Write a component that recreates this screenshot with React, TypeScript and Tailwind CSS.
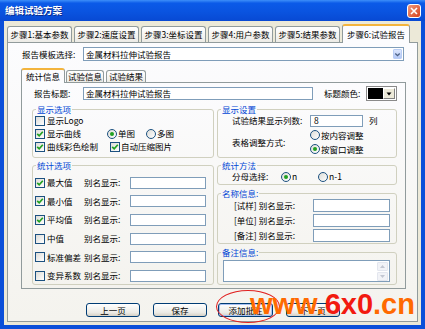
import type { ReactNode } from "react";

const Check = ({ on }: { on?: boolean }) => (
  <span className="flex h-[10px] w-[10px] shrink-0 items-center justify-center border border-[#1c5180] bg-[linear-gradient(135deg,#dcdcd7,#ffffff)]">
    {on && (
      <svg width="8" height="8" viewBox="0 0 8 8">
        <path d="M1.2 3.8 L3.2 5.8 L6.8 1.8" stroke="#21a121" strokeWidth="1.7" fill="none" />
      </svg>
    )}
  </span>
);

const Radio = ({ on }: { on?: boolean }) => (
  <span className="flex h-[10px] w-[10px] shrink-0 items-center justify-center rounded-full border border-[#1c5180] bg-[linear-gradient(135deg,#dcdcd7,#ffffff)]">
    {on && <span className="h-[4px] w-[4px] rounded-full bg-[#21a121]" />}
  </span>
);

const Legend = ({ children }: { children: ReactNode }) => (
  <legend className="ml-[3px] px-[1px] leading-[11px] text-[#0046d5]">{children}</legend>
);

const Button = ({ label, focus }: { label: string; focus?: boolean }) => (
  <div
    className={
      focus
        ? "flex h-[14px] w-[55px] items-center justify-center rounded-[3px] border border-[#003c74] bg-[linear-gradient(#ffffff,#ecebe6_70%,#d6d0c5)] shadow-[inset_0_0_0_1px_#a8c1f2]"
        : "flex h-[14px] w-[54px] items-center justify-center rounded-[3px] border border-[#003c74] bg-[linear-gradient(#ffffff,#ecebe6_70%,#d6d0c5)]"
    }
  >
    {label}
  </div>
);

const steps = ["步骤1:基本参数", "步骤2:速度设置", "步骤3:坐标设置", "步骤4:用户参数", "步骤5:结果参数"];

const stats = [
  { label: "最大值", on: true },
  { label: "最小值", on: true },
  { label: "平均值", on: true },
  { label: "中值", on: false },
  { label: "标准偏差", on: false },
  { label: "变异系数", on: false },
];

const names = ["[试样]", "[单位]", "[备注]"];

export default function App() {
  return (
    <div className="relative h-[329px] w-[425px] overflow-hidden whitespace-nowrap bg-[#0b4fd9] font-['Noto_Sans_CJK_SC',sans-serif] text-[8.5px] leading-[11px] text-black">
      {/* Title bar */}
      <div className="flex h-[21px] items-center justify-between bg-[linear-gradient(#3d8ff9_0%,#0b5ae8_15%,#0a54e0_55%,#0849d3_100%)] pl-[5px] pr-[4px]">
        <span className="text-[9.5px] font-bold text-white [text-shadow:1px_1px_#0a2a8c]">编辑试验方案</span>
        <div className="mt-[1px] flex h-[14px] w-[14px] items-center justify-center rounded-[3px] border border-white bg-[linear-gradient(135deg,#f29a7c,#d8431c)]">
          <svg width="8" height="8" viewBox="0 0 8 8">
            <path d="M1 1 L7 7 M7 1 L1 7" stroke="#ffffff" strokeWidth="1.6" />
          </svg>
        </div>
      </div>

      {/* Body */}
      <div className="mx-[4px] flex h-[304px] flex-col bg-[#ece9d8] px-[3px]">
        {/* Step tabs */}
        <div className="flex h-[21px] items-end">
          {steps.map((s) => (
            <div
              key={s}
              className="mr-[2px] flex h-[16px] w-[65px] items-center justify-center rounded-t-[3px] border border-b-0 border-[#919b9c] bg-[linear-gradient(#ffffff,#ecebe6)]"
            >
              {s}
            </div>
          ))}
          <div className="relative z-10 -mb-[1px] flex h-[19px] w-[68px] items-center justify-center rounded-t-[3px] border border-b-0 border-[#919b9c] border-t-2 border-t-[#f3b43d] bg-[#fcfcfe]">
            步骤6:试验报告
          </div>
        </div>

        {/* Step panel */}
        <div className="flex h-[280px] flex-col border border-[#919b9c] bg-[linear-gradient(#fcfcfe,#f4f3ee)]">
          <div className="mt-[4px] flex h-[14px] items-center pl-[14px]">
            <span className="w-[61px]">报告模板选择:</span>
            <div className="flex h-[14px] w-[321px] items-center justify-between border border-[#7f9db9] bg-white pl-[2px] pr-[1px]">
              <span>金属材料拉伸试验报告</span>
              <span className="flex h-[10px] w-[9px] items-center justify-center rounded-[1px] border border-[#b9cdf5] bg-[linear-gradient(#dce6fd,#b4c8f6)]">
                <svg width="7" height="7" viewBox="0 0 7 7">
                  <path d="M1.3 2.5 L3.5 4.7 L5.7 2.5" stroke="#4d6185" strokeWidth="1.3" fill="none" />
                </svg>
              </span>
            </div>
          </div>

          {/* Inner tabs */}
          <div className="mt-[3px] flex h-[18px] items-end pl-[13px]">
            <div className="relative z-10 -mb-[1px] flex h-[15px] w-[44px] items-center justify-center rounded-t-[3px] border border-b-0 border-[#919b9c] border-t-2 border-t-[#f3b43d] bg-[#fcfcfe]">
              统计信息
            </div>
            <div className="ml-[1px] flex h-[12px] w-[38px] items-center justify-center rounded-t-[3px] border border-b-0 border-[#919b9c] bg-[linear-gradient(#ffffff,#ecebe6)]">
              试验信息
            </div>
            <div className="ml-[2px] flex h-[12px] w-[40px] items-center justify-center rounded-t-[3px] border border-b-0 border-[#919b9c] bg-[linear-gradient(#ffffff,#ecebe6)]">
              试验结果
            </div>
          </div>

          {/* Inner panel */}
          <div className="ml-[13px] flex h-[207px] w-[385px] flex-col border border-[#919b9c] bg-[linear-gradient(#fcfcfe,#f4f3ee)]">
            <div className="mt-[4px] flex h-[13px] items-center pl-[12px]">
              <span className="w-[49px]">报告标题:</span>
              <div className="flex h-[13px] w-[230px] items-center border border-[#7f9db9] bg-white pl-[2px]">
                金属材料拉伸试验报告
              </div>
              <span className="ml-[11px] w-[42px]">标题颜色:</span>
              <div className="flex h-[15px] w-[31px] border border-[#8a8a8a] bg-white p-[1px]">
                <div className="flex-1 bg-black" />
                <div className="flex w-[12px] items-center justify-center border border-[#ffffff] border-b-[#808080] border-r-[#808080] bg-[#ece9d8]">
                  <svg width="6" height="4" viewBox="0 0 6 4">
                    <path d="M0.5 0.5 H5.5 L3 3.5 Z" fill="#000000" />
                  </svg>
                </div>
              </div>
            </div>

            <div className="mt-[4px] flex gap-[3px] pl-[10px]">
              {/* Left column */}
              <div className="flex w-[182px] flex-col">
                <fieldset className="h-[54px] rounded-[3px] border border-[#d0d0bf]">
                  <Legend>显示选项</Legend>
                  <div className="pl-[2px]">
                    <div className="-mt-[1px] flex h-[13px] items-center gap-[2px]">
                      <Check />
                      <span>显示Logo</span>
                    </div>
                    <div className="flex h-[13px] items-center">
                      <div className="flex w-[72px] items-center gap-[2px]">
                        <Check on />
                        <span>显示曲线</span>
                      </div>
                      <div className="flex w-[39px] items-center gap-[1px]">
                        <Radio on />
                        <span>单图</span>
                      </div>
                      <div className="flex items-center gap-[1px]">
                        <Radio />
                        <span>多图</span>
                      </div>
                    </div>
                    <div className="flex h-[13px] items-center">
                      <div className="flex w-[75px] items-center gap-[2px]">
                        <Check on />
                        <span>曲线彩色绘制</span>
                      </div>
                      <div className="flex items-center gap-[1px]">
                        <Check on />
                        <span>自动压缩图片</span>
                      </div>
                    </div>
                  </div>
                </fieldset>

                <fieldset className="mt-[2px] h-[125px] rounded-[3px] border border-[#d0d0bf]">
                  <Legend>统计选项</Legend>
                  <div className="flex flex-col pl-[2px] pt-[2.5px]">
                    {stats.map((s) => (
                      <div key={s.label} className="flex h-[18.6px] shrink-0 items-center">
                        <div className="flex w-[49px] items-center gap-[2px]">
                          <Check on={s.on} />
                          <span>{s.label}</span>
                        </div>
                        <span className="w-[46px]">别名显示:</span>
                        <div className="h-[12px] w-[76px] border border-[#7f9db9] bg-white" />
                      </div>
                    ))}
                  </div>
                </fieldset>
              </div>

              {/* Right column */}
              <div className="flex w-[180px] flex-col">
                <fieldset className="h-[54px] rounded-[3px] border border-[#d0d0bf]">
                  <Legend>显示设置</Legend>
                  <div className="pl-[14px]">
                    <div className="-mt-[1px] flex h-[13px] items-center">
                      <span className="w-[78px]">试验结果显示列数:</span>
                      <div className="flex h-[12px] w-[53px] items-center border border-[#7f9db9] bg-white pl-[3px]">8</div>
                      <span className="ml-[6px]">列</span>
                    </div>
                    <div className="mt-[1px] flex h-[28px]">
                      <span className="w-[78px] self-center">表格调整方式:</span>
                      <div className="flex flex-col">
                        <div className="flex h-[14px] items-center gap-[1px]">
                          <Radio />
                          <span>按内容调整</span>
                        </div>
                        <div className="flex h-[14px] items-center gap-[1px]">
                          <Radio on />
                          <span>按窗口调整</span>
                        </div>
                      </div>
                    </div>
                  </div>
                </fieldset>

                <fieldset className="mt-[2px] h-[25px] rounded-[3px] border border-[#d0d0bf]">
                  <Legend>统计方法</Legend>
                  <div className="flex h-[11px] items-center pl-[14px]">
                    <span className="w-[49px]">分母选择:</span>
                    <div className="flex w-[37px] items-center gap-[1px]">
                      <Radio on />
                      <span>n</span>
                    </div>
                    <div className="flex items-center gap-[1px]">
                      <Radio />
                      <span>n-1</span>
                    </div>
                  </div>
                </fieldset>

                <fieldset className="mt-[3px] h-[56px] rounded-[3px] border border-[#d0d0bf]">
                  <Legend>名称信息:</Legend>
                  <div className="pl-[16px]">
                    {names.map((n, i) => (
                      <div key={n} className={i === 0 ? "-mt-[1px] flex h-[15px] items-center" : "flex h-[15px] items-center"}>
                        <span className="w-[79px]">{n} 别名显示:</span>
                        <div className="h-[13px] w-[77px] border border-[#7f9db9] bg-white" />
                      </div>
                    ))}
                  </div>
                </fieldset>

                <fieldset className="mt-[3px] h-[38px] rounded-[3px] border border-[#d0d0bf]">
                  <Legend>备注信息:</Legend>
                  <div className="pl-[5px]">
                    <div className="mt-[2px] flex h-[22px] w-[167px] items-center justify-end border border-[#7f9db9] bg-white pr-[1px]">
                      <div className="flex flex-col gap-[1px]">
                        <div className="flex h-[9px] w-[11px] items-center justify-center rounded-[1px] border border-[#e3e6ee] bg-[#f2f3f7]">
                          <svg width="5" height="3" viewBox="0 0 5 3">
                            <path d="M0 3 L2.5 0 L5 3 Z" fill="#c3c7d2" />
                          </svg>
                        </div>
                        <div className="flex h-[9px] w-[11px] items-center justify-center rounded-[1px] border border-[#e3e6ee] bg-[#f2f3f7]">
                          <svg width="5" height="3" viewBox="0 0 5 3">
                            <path d="M0 0 L2.5 3 L5 0 Z" fill="#c3c7d2" />
                          </svg>
                        </div>
                      </div>
                    </div>
                  </div>
                </fieldset>
              </div>
            </div>
          </div>

          {/* Buttons */}
          <div className="mt-[14px] flex h-[14px]">
            <div className="ml-[78px]">
              <Button label="上一页" />
            </div>
            <div className="ml-[13px]">
              <Button label="保存" />
            </div>
            <div className="ml-[11px]">
              <Button label="添加批注" focus />
            </div>
            <div className="ml-[13px]">
              <Button label="下一页" />
            </div>
          </div>
        </div>
      </div>

      {/* Watermark overlay */}
      <div className="pointer-events-none absolute left-[216px] top-[290px] h-[33px] w-[64px] rounded-[50%] border border-[#e02020]" />
      <div className="pointer-events-none absolute left-[250px] top-[290px] font-['Liberation_Sans',Arial,sans-serif] text-[29px] font-bold leading-[29px]">
        <span className="text-[#ff6a00]">www.</span>
        <span className="text-[#f21a10]">6x0</span>
        <span className="text-[#ff6a00]">.cn</span>
      </div>
    </div>
  );
}
